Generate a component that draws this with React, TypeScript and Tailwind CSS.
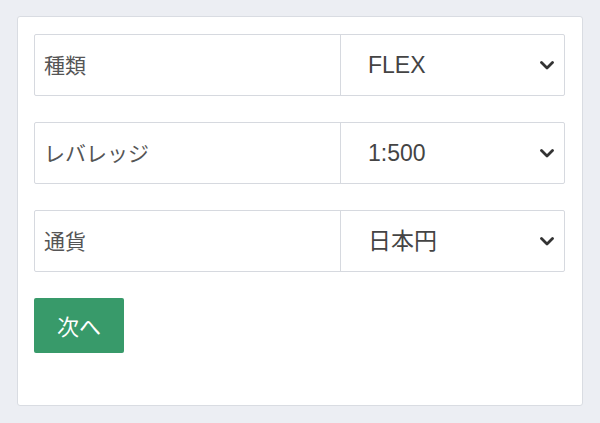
import React from "react";

function Chevron() {
  return (
    <svg width="14" height="9" viewBox="0 0 14 9" className="shrink-0">
      <polyline points="1.5,1.5 7,7 12.5,1.5" fill="none" stroke="#333" strokeWidth="2.8" strokeLinecap="round" strokeLinejoin="round" />
    </svg>
  );
}

function Row({ label, value }: { label: string; value: string }) {
  return (
    <div className="flex h-[62px] border border-[#d6d9df] rounded-[2px] bg-white">
      <div className="w-[306px] border-r border-[#d6d9df] flex items-center pl-[9px] text-[21px] text-[#555] font-['Noto_Sans_CJK_JP',sans-serif]">
        {label}
      </div>
      <div className="flex-1 flex items-center justify-between pl-[27px] pr-[10px] text-[23px] text-[#444] font-['Liberation_Sans','Noto_Sans_CJK_JP',sans-serif]">
        <span>{value}</span>
        <Chevron />
      </div>
    </div>
  );
}

export default function App() {
  return (
    <div className="w-[600px] h-[423px] bg-[#eceef3] pt-[16px] pl-[17px] font-['Noto_Sans_CJK_JP',sans-serif]">
      <div className="w-[566px] h-[390px] bg-white border border-[#d9dce2] rounded-[3px] p-[17px] pl-[16px] flex flex-col gap-[26px]">
        <Row label="種類" value="FLEX" />
        <Row label="レバレッジ" value="1:500" />
        <Row label="通貨" value="日本円" />
        <button className="w-[90px] h-[55px] bg-[#389a6a] text-white text-[22px] rounded-[2px] flex items-center justify-center font-['Noto_Sans_CJK_JP',sans-serif]">
          次へ
        </button>
      </div>
    </div>
  );
}
